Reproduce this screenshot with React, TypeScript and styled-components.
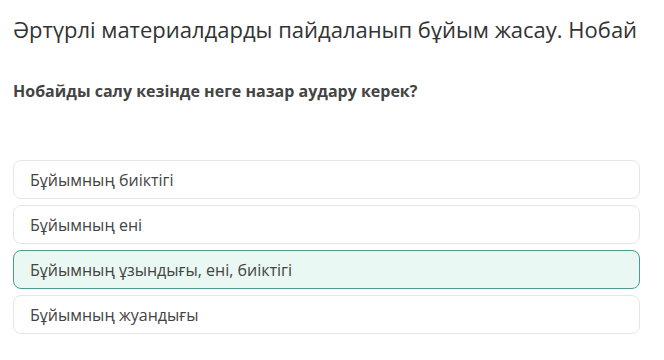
import styled, { createGlobalStyle } from "styled-components";

const GlobalStyle = createGlobalStyle`
  body {
    margin: 0;
    background: #ffffff;
    font-family: "Open Sans", "Liberation Sans", sans-serif;
  }
`;

const Page = styled.div`
  width: 664px;
  height: 360px;
  padding: 14px 24px 0 13px;
  box-sizing: border-box;
  display: flex;
  flex-direction: column;
`;

const Title = styled.h1`
  margin: 0;
  font-size: 22px;
  font-weight: 400;
  line-height: 30px;
  color: #333333;
  white-space: nowrap;
`;

const Question = styled.p`
  margin: 36px 0 0;
  font-size: 16px;
  font-weight: 700;
  line-height: 22px;
  color: #444444;
`;

const Options = styled.div`
  margin-top: 58px;
  display: flex;
  flex-direction: column;
  gap: 6px;
`;

const Option = styled.div<{ $selected?: boolean }>`
  height: 39px;
  box-sizing: border-box;
  display: flex;
  align-items: center;
  padding: 0 16px;
  border-radius: 8px;
  border: 1px solid ${({ $selected }) => ($selected ? "#4f9a8e" : "#e6e6e6")};
  background: ${({ $selected }) => ($selected ? "#eaf8f3" : "#ffffff")};
  font-size: 16px;
  color: #444444;
`;

const answers = [
  { text: "Бұйымның биіктігі" },
  { text: "Бұйымның ені" },
  { text: "Бұйымның ұзындығы, ені, биіктігі", selected: true },
  { text: "Бұйымның жуандығы" },
];

export default function App() {
  return (
    <>
      <GlobalStyle />
      <Page>
        <Title>Әртүрлі материалдарды пайдаланып бұйым жасау. Нобай</Title>
        <Question>Нобайды салу кезінде неге назар аудару керек?</Question>
        <Options>
          {answers.map((a) => (
            <Option key={a.text} $selected={a.selected}>
              {a.text}
            </Option>
          ))}
        </Options>
      </Page>
    </>
  );
}
